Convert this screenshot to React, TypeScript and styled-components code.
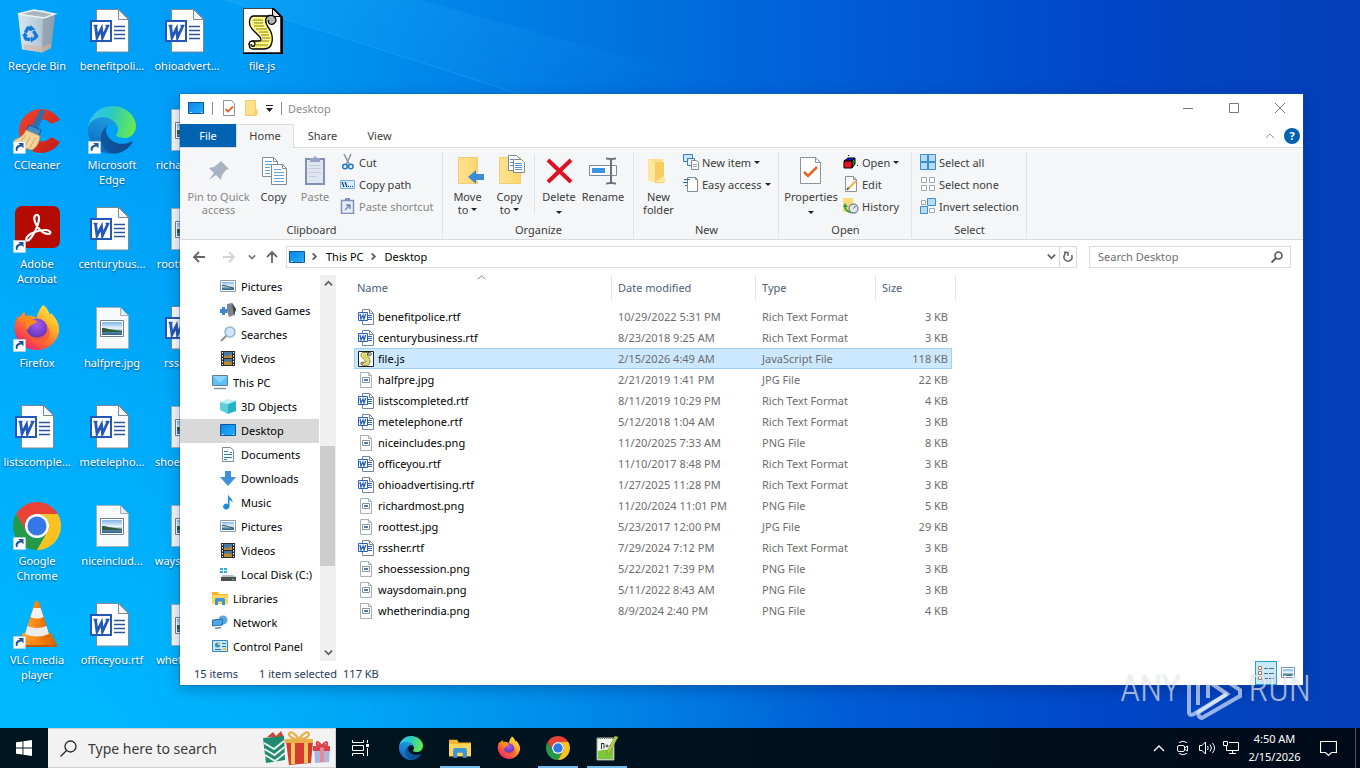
import React from "react";
import styled, { createGlobalStyle, css } from "styled-components";

const GlobalStyle = createGlobalStyle`
  *, *::before, *::after { box-sizing: border-box; }
  body {
    margin: 0;
    font-family: "Noto Sans", "Open Sans", sans-serif;
    font-size: 11px;
    line-height: 15px;
    color: #000;
  }
  button, input {
    font: inherit;
    color: inherit;
    margin: 0;
    padding: 0;
    border: 0;
    background: none;
  }
  svg { display: block; flex: none; }
`;

/* ---------- Desktop ---------- */

const Screen = styled.div`
  position: relative;
  display: flex;
  flex-direction: column;
  min-height: 100vh;
  overflow: hidden;
  background:
    radial-gradient(ellipse 62% 85% at 0% 100%, rgba(0, 190, 255, 0.85) 0%, rgba(0, 180, 255, 0) 100%),
    linear-gradient(90deg, #00a3fb 0%, #009cf6 18%, #0086ea 32%, #0062d8 58%, #0046c6 82%, #033fb8 100%);
`;

const Rays = styled.svg`
  position: absolute;
  inset: 0;
  width: 100%;
  height: 100%;
`;

const DesktopArea = styled.main`
  position: relative;
  flex: 1;
`;

const IconGrid = styled.ul`
  display: grid;
  grid-template-rows: repeat(7, 99px);
  grid-auto-columns: 75px;
  grid-auto-flow: column;
  margin: 0;
  padding: 0;
  list-style: none;
`;

const DesktopIcon = styled.button`
  display: flex;
  flex-direction: column;
  align-items: center;
  gap: 3px;
  width: 74px;
  padding-top: 7px;
  color: #fff;
  text-align: center;
  text-shadow: 0 1px 2px rgba(0, 30, 80, 0.7);
`;

const IconLabel = styled.span`
  white-space: nowrap;
`;

/* ---------- Explorer window ---------- */

const Window = styled.section`
  position: absolute;
  top: 94px;
  bottom: 43px;
  left: 180px;
  right: 57px;
  display: flex;
  flex-direction: column;
  background: #fff;
  box-shadow: 0 0 0 1px rgba(20, 90, 160, 0.35), 0 4px 14px rgba(0, 20, 70, 0.3);
`;

const TitleBar = styled.header`
  display: flex;
  align-items: center;
  height: 30px;
  padding: 0 0 2px 8px;
  color: #8b8b8b;
`;

const QuickTools = styled.div`
  display: flex;
  align-items: center;
  gap: 8px;
`;

const Bar = styled.span`
  width: 1px;
  height: 13px;
  background: #8a8a8a;
`;

const WindowTitle = styled.h1`
  flex: 1;
  margin: 0 0 0 6px;
  font-size: 11px;
  font-weight: 400;
`;

const CaptionButton = styled.button`
  display: grid;
  place-items: center;
  width: 46px;
  height: 28px;
`;

const Tabs = styled.nav`
  display: flex;
  align-items: stretch;
  height: 24px;
  border-bottom: 1px solid #dadbdc;
  color: #3c3c3c;
`;

const Tab = styled.button<{ $kind?: "file" | "active" }>`
  width: 57px;
  ${(p) =>
    p.$kind === "file" &&
    css`
      width: 56px;
      background: #0063b1;
      color: #fff;
    `}
  ${(p) =>
    p.$kind === "active" &&
    css`
      width: 58px;
      margin-bottom: -1px;
      padding-bottom: 2px;
      background: #f5f6f7;
      border: 1px solid #dadbdc;
      border-bottom: 0;
    `}
`;

const TabTools = styled.div`
  display: flex;
  align-items: center;
  gap: 9px;
  margin-left: auto;
  padding-right: 3px;
`;

const Help = styled.button`
  width: 16px;
  height: 16px;
  border-radius: 50%;
  background: #0063b1;
  color: #fff;
  font-weight: 700;
  line-height: 16px;
`;

const Ribbon = styled.div`
  display: flex;
  height: 92px;
  background: #f5f6f7;
  border-bottom: 1px solid #dadbdc;
  color: #3c3c3c;
`;

const Group = styled.div<{ $width: number }>`
  display: flex;
  flex-direction: column;
  flex: none;
  width: ${(p) => p.$width}px;
  background: linear-gradient(#e2e3e4, #e2e3e4) right 4px / 1px 86px no-repeat;
`;

const GroupBody = styled.div`
  display: flex;
  height: 73px;
  align-items: flex-start;
  padding-left: 4px;
`;

const GroupName = styled.div`
  line-height: 18px;
  text-align: center;
`;

const BigButton = styled.button<{ $width: number; $muted?: boolean }>`
  display: flex;
  flex-direction: column;
  align-items: center;
  gap: 4px;
  width: ${(p) => p.$width}px;
  padding-top: 6px;
  line-height: 13px;
  white-space: nowrap;
  color: ${(p) => (p.$muted ? "#868686" : "inherit")};
`;

const Divider = styled.span`
  width: 1px;
  height: 60px;
  margin: 6px 3px 0 3px;
  background: #e2e3e4;
`;

const Stack = styled.div`
  display: flex;
  flex-direction: column;
  padding: 3px 0 0 4px;
`;

const SmallButton = styled.button<{ $muted?: boolean }>`
  display: flex;
  align-items: center;
  gap: 3px;
  height: 22px;
  white-space: nowrap;
  color: ${(p) => (p.$muted ? "#868686" : "inherit")};
`;

const AddressRow = styled.div`
  display: flex;
  align-items: center;
  height: 35px;
  padding: 0 12px 2px;
`;

const NavButtons = styled.div`
  display: grid;
  grid-template-columns: 30px 26px 17px 21px;
  align-items: center;
  justify-items: start;
`;

const AddressBar = styled.div`
  display: flex;
  align-items: center;
  flex: 1;
  height: 22px;
  border: 1px solid #d9d9d9;
  padding-left: 2px;
`;

const Crumb = styled.button`
  padding: 0 7px 0 5px;
`;

const AddressEnd = styled.div`
  display: flex;
  align-items: center;
  align-self: stretch;
  margin-left: auto;
`;

const RefreshButton = styled.button`
  display: grid;
  place-items: center;
  width: 17px;
  height: 20px;
  margin-left: 3px;
  border-left: 1px solid #d9d9d9;
`;

const SearchBox = styled.label`
  display: flex;
  align-items: center;
  width: 202px;
  height: 22px;
  margin-left: 12px;
  padding: 0 7px 0 8px;
  border: 1px solid #d9d9d9;

  input {
    flex: 1;
    min-width: 0;
    outline: 0;
  }
  input::placeholder {
    color: #6d6d6d;
    opacity: 1;
  }
`;

const Content = styled.div`
  display: flex;
  flex: 1;
  min-height: 0;
`;

const NavPane = styled.ul`
  width: 139px;
  margin: 0;
  padding: 0;
  list-style: none;
`;

const NavItem = styled.button<{ $level: number; $selected?: boolean }>`
  display: flex;
  align-items: center;
  gap: 5px;
  width: 100%;
  height: 24px;
  padding: 0 0 2px ${(p) => (p.$level === 1 ? 32 : 40)}px;
  white-space: nowrap;
  background: ${(p) => (p.$selected ? "#d9d9d9" : "transparent")};
`;

const ScrollTrack = styled.div`
  display: flex;
  flex-direction: column;
  align-items: center;
  justify-content: space-between;
  width: 17px;
  border-left: 1px solid #fff;
  background: #f0f0f0;
`;

const ScrollArrow = styled.button`
  display: grid;
  place-items: center;
  width: 16px;
  height: 17px;
`;

const ScrollSpace = styled.div`
  flex: 1;
  width: 100%;
  display: flex;
  flex-direction: column;

  &::before { content: ""; flex: 154; }
  &::after { content: ""; flex: 78; }
`;

const ScrollThumb = styled.div`
  flex: 120;
  margin-right: 1px;
  background: #cdcdcd;
`;

const FilePane = styled.div`
  flex: 1;
  padding-left: 18px;
`;

const FileTable = styled.table`
  width: 602px;
  table-layout: fixed;
  border-collapse: separate;
  border-spacing: 0;
  text-align: left;
  color: #6d6d6d;

  th {
    padding: 0 0 6px;
    font-weight: 400;
    color: #4c607a;
  }
  td {
    height: 21px;
    padding: 0 0 0 6px;
  }
  th:first-child, td:first-child { padding-left: 3px; }
  td:last-child {
    padding: 0 4px 0 0;
    border-right: 4px solid transparent;
    background-clip: padding-box;
    text-align: right;
  }
`;

const HeadButton = styled.button`
  position: relative;
  display: block;
  width: 100%;
  height: 25px;
  padding-left: 6px;
  text-align: left;
  border-right: 1px solid #e5e5e5;

  th:first-child & { padding-left: 0; }
`;

const SortMark = styled.span`
  position: absolute;
  top: -2px;
  left: 50%;
  margin-left: -7px;
`;

const FileRow = styled.tr<{ $selected?: boolean }>`
  ${(p) =>
    p.$selected &&
    css`
      td {
        background-color: #cce8ff;
        box-shadow: inset 0 1px #99d1ff, inset 0 -1px #99d1ff;
      }
      td:first-child { box-shadow: inset 0 1px #99d1ff, inset 0 -1px #99d1ff, inset 1px 0 #99d1ff; }
      td:last-child { box-shadow: inset 0 1px #99d1ff, inset 0 -1px #99d1ff, inset -1px 0 #99d1ff; }
    `}
`;

const FileName = styled.span`
  display: flex;
  align-items: center;
  gap: 4px;
  padding-left: 1px;
  color: #000;
`;

const StatusBar = styled.footer`
  display: flex;
  align-items: center;
  height: 24px;
  padding: 0 8px 0 14px;
  gap: 6px;
  color: #1e395b;
`;

const ItemCount = styled.span`
  width: 59px;
`;

const ViewButton = styled.button<{ $on?: boolean }>`
  display: grid;
  place-items: center;
  width: ${(p) => (p.$on ? 22 : 14)}px;
  height: 24px;
  background: ${(p) => (p.$on ? "#cbe8f6" : "transparent")};
  border: ${(p) => (p.$on ? "1px solid #26a0da" : "0")};
`;

const ViewButtons = styled.div`
  display: flex;
  gap: 4px;
  margin-left: auto;
`;

/* ---------- Watermark ---------- */

const Watermark = styled.div`
  position: absolute;
  right: 49px;
  bottom: 47px;
  display: flex;
  align-items: center;
  gap: 4px;
  height: 64px;
  font-family: "Roboto Condensed", Roboto, sans-serif;
  font-size: 36px;
  font-weight: 300;
  line-height: 64px;
  color: rgba(255, 255, 255, 0.6);
  text-shadow: 0 0 2px rgba(90, 110, 150, 0.35);
  pointer-events: none;
`;

/* ---------- Taskbar ---------- */

const Taskbar = styled.footer`
  position: relative;
  display: flex;
  height: 40px;
  background: linear-gradient(90deg, #001722 0%, #00131f 45%, #000a1a 100%);
  color: #fff;
`;

const TaskButton = styled.button<{ $running?: boolean }>`
  display: grid;
  place-items: center;
  width: 48px;
  height: 40px;
  background: ${(p) =>
    p.$running ? "linear-gradient(#76b9ed, #76b9ed) center bottom / 40px 2px no-repeat" : "none"};
`;

const Apps = styled.div`
  display: flex;
  gap: 1px;
  margin-left: 3px;
`;

const TaskSearch = styled.label`
  display: flex;
  align-items: center;
  width: 288px;
  gap: 11px;
  padding: 0 4px 0 12px;
  background: #f2f2f2;
  border: 1px solid #d0d0d0;
  border-left: 0;
  font-size: 14px;

  input {
    flex: 1;
    min-width: 0;
    outline: 0;
    height: 24px;
  }
  input::placeholder {
    color: #3a3a3a;
    opacity: 1;
  }
`;

const Tray = styled.div`
  display: flex;
  margin-left: auto;
`;

const TrayButton = styled.button<{ $width?: number }>`
  display: grid;
  place-items: center;
  width: ${(p) => p.$width ?? 24}px;
`;

const Clock = styled.button`
  width: 63px;
  line-height: 18px;
  text-align: center;
`;

const ShowDesktop = styled.button`
  width: 5px;
  margin-left: 5px;
  border-left: 1px solid #4a5560;
`;

/* ---------- Shared drawing definitions ---------- */

const Defs = styled.svg`
  position: absolute;
`;

const SharedDefs = () => (
  <Defs width="0" height="0" aria-hidden="true">
    <defs>
      <linearGradient id="edgeA" x1="0" y1="0.6" x2="1" y2="0.6">
        <stop offset="0" stopColor="#0c59a4" />
        <stop offset="1" stopColor="#114a8b" />
      </linearGradient>
      <linearGradient id="edgeB" x1="0.6" y1="0" x2="0.2" y2="1">
        <stop offset="0" stopColor="#1b9de2" />
        <stop offset="0.5" stopColor="#1683d0" />
        <stop offset="1" stopColor="#0a5fae" />
      </linearGradient>
      <linearGradient id="edgeC" x1="0" y1="0.3" x2="1" y2="0.5">
        <stop offset="0" stopColor="#35c1f1" />
        <stop offset="0.45" stopColor="#2cc9c2" />
        <stop offset="1" stopColor="#66eb4e" />
      </linearGradient>
      <linearGradient id="foxBody" x1="0.9" y1="0.05" x2="0.2" y2="0.95">
        <stop offset="0" stopColor="#fff24a" />
        <stop offset="0.35" stopColor="#ffb02a" />
        <stop offset="0.65" stopColor="#ff6a2f" />
        <stop offset="1" stopColor="#ee1f6c" />
      </linearGradient>
      <radialGradient id="foxGlobe" cx="0.5" cy="0.3" r="0.7">
        <stop offset="0" stopColor="#a55ae8" />
        <stop offset="1" stopColor="#5a2fb8" />
      </radialGradient>
      <linearGradient id="screenBlue" x1="0" y1="0" x2="1" y2="1">
        <stop offset="0" stopColor="#0a84e8" />
        <stop offset="1" stopColor="#25b0fb" />
      </linearGradient>
      <linearGradient id="photo" x1="0" y1="0" x2="0" y2="1">
        <stop offset="0" stopColor="#7fb5ea" />
        <stop offset="0.5" stopColor="#e8f4f8" />
        <stop offset="0.75" stopColor="#5b8fa8" />
        <stop offset="1" stopColor="#2c5f86" />
      </linearGradient>
      <linearGradient id="binSide" x1="0" y1="0" x2="1" y2="0">
        <stop offset="0" stopColor="#e9eef2" />
        <stop offset="0.6" stopColor="#c4ccd3" />
        <stop offset="1" stopColor="#98a5b0" />
      </linearGradient>
      <linearGradient id="coneOrange" x1="0" y1="0" x2="1" y2="0">
        <stop offset="0" stopColor="#ffa53a" />
        <stop offset="0.5" stopColor="#f78412" />
        <stop offset="1" stopColor="#d96400" />
      </linearGradient>
      <linearGradient id="folderFill" x1="0" y1="0" x2="1" y2="0">
        <stop offset="0" stopColor="#ffe394" />
        <stop offset="1" stopColor="#fbd568" />
      </linearGradient>
      <linearGradient id="ccRed" x1="0" y1="0" x2="1" y2="1">
        <stop offset="0" stopColor="#f4452e" />
        <stop offset="1" stopColor="#c41a16" />
      </linearGradient>
      <linearGradient id="rayFade" x1="0" y1="0" x2="1" y2="0.6">
        <stop offset="0" stopColor="#2fb4ff" stopOpacity="0.22" />
        <stop offset="1" stopColor="#2fb4ff" stopOpacity="0" />
      </linearGradient>
      <pattern id="parchment" width="2" height="2" patternUnits="userSpaceOnUse">
        <path d="M0 0h2v2H0z" fill="#fbf56a" />
        <path d="M0 0h1v1H0z" fill="#fffde0" />
      </pattern>
    </defs>
  </Defs>
);

/* ---------- Desktop icon drawings ---------- */

const Shortcut = () => (
  <g>
    <path d="M0.500 35.500h12v12h-12z" fill="#fff" stroke="#c5d3e0" strokeWidth="0.600" />
    <path d="M3 45c-1-4 1-6 4-6.200l-1.800-1.800h5.300v5.300l-1.800-1.700c-2.200 0-4.500 1.400-4.200 4.400z" fill="#1e5799" />
  </g>
);

const WordArt = () => (
  <svg width="48" height="48" viewBox="0 0 48 48">
    <path d="M8.500 2.500h22.500l9.500 9.500v33h-32z" fill="#fff" stroke="#7b8794" />
    <path d="M30.500 2.500v10h10z" fill="#f2f6fa" stroke="#7b8794" />
    <path d="M26 19.500h11M26 23.500h11M26 27.500h11M26 31.500h11" stroke="#2b579a" strokeWidth="1.300" />
    <path d="M3 14h20v20H3z" fill="#fff" stroke="#2458b8" strokeWidth="2" />
    <path d="M7.500 18.500l1.500 12 4.500-9 1 9 5.500-12" fill="none" stroke="#2458b8" strokeWidth="2.800" />
    <path d="M5.500 18.500h4M17.500 18.500h4" stroke="#2458b8" strokeWidth="1.500" />
  </svg>
);

const PictureArt = () => (
  <svg width="48" height="48" viewBox="0 0 48 48">
    <path d="M8.500 3.500h24l8 8v33h-32z" fill="#f8f9fa" stroke="#9fb0bd" />
    <path d="M32.500 3.500v8h8z" fill="#e3ebf0" stroke="#9fb0bd" />
    <path d="M12.500 16.500h23v16h-23z" fill="#fff" stroke="#6e7f92" />
    <path d="M14 18h20v13H14z" fill="url(#photo)" />
    <path d="M14 24c5 0 9 2 20 3v1H14z" fill="#2f5a3b" />
  </svg>
);

const RecycleArt = () => (
  <svg width="48" height="48" viewBox="0 0 48 48">
    <path d="M5 7l25-4 12 5-4 33-9 4.500-20-3z" fill="url(#binSide)" opacity="0.92" />
    <path d="M30 9l12-1-4 33-9 4.500z" fill="#8f9ba6" opacity="0.7" />
    <path d="M5 7l16-4 21 4-11 4z" fill="#a9b6c0" stroke="#eef3f6" strokeWidth="1.400" />
    <path d="M10 37l19 3 9-4-.5 5-8.500 4.500-18-3z" fill="#d9b49c" opacity="0.6" />
    <g fill="none" stroke="#1379d2" strokeWidth="3.400">
      <path d="M12.500 25.500l2.500-4.500 4 .8" />
      <path d="M20.500 24l3 5-2.500 3" />
      <path d="M17.500 32.500l-4.500-.5-1.500-3" />
    </g>
    <path d="M17.500 18l5 4.500-6 1.500zM18 29.500v6l4-3zM9 29l3-4 3 4z" fill="#1379d2" />
  </svg>
);

const ScriptShape = () => (
  <g stroke="#000" strokeWidth="1.300">
    <path
      d="M14 9h17c-5 2-5 7-2 11 4 5 5 9 4 15-1 5-4 7-8 7H14c-5 0-5-8 0-8h6c3 0 2-3 0-5l-7-7c-4-4-3-12 1-13z"
      fill="url(#parchment)"
    />
    <path d="M27 16c-3-8 9-11 10-3 0 3-3 5-6 4-2-1-2-3-1-4" fill="#b4b4b4" />
    <path d="M10 38c0-5 6-5 6-1 0 3-4 3-4 0" fill="#fdfbc0" />
    <path
      d="M14 13h10M15 16h9M15 19h10M17 22h11M20 25h9M22 28h8M23 31h8M22 34h8M17 38h12"
      stroke="#7d7600"
      strokeWidth="0.900"
    />
  </g>
);

const ScriptArt = () => (
  <svg width="48" height="48" viewBox="0 0 48 48">
    <path d="M5 1h31l9 9v37H5z" fill="#000" />
    <path d="M5.500 1.500h29l8 8v36h-37z" fill="#fff" stroke="#444" />
    <path d="M34.500 1.500v8h8z" fill="#ddd" stroke="#000" />
    <g transform="translate(1 0)">
      <ScriptShape />
    </g>
  </svg>
);

const CCleanerArt = () => (
  <svg width="48" height="48" viewBox="0 0 48 48">
    <path d="M47 14A22 22 0 1 0 47 36l-9-5a11 11 0 1 1 0-13z" fill="url(#ccRed)" />
    <path d="M28 3l4 2-7 18-6-3z" fill="#2b6fb3" />
    <path d="M16 19l12 5-2 6-13-5z" fill="#3f8ed0" stroke="#1d568f" />
    <path d="M13 24l14 6c-1 7-3 11-8 14-5-1-13-4-18-10 6-2 10-5 12-10z" fill="#f3d49c" stroke="#c99b55" />
    <path d="M13 29l-6 7M17 31l-5 9M22 32l-5 10" stroke="#d0a566" />
    <Shortcut />
  </svg>
);

const EdgeArt = ({ size = 48, shortcut = false }: { size?: number; shortcut?: boolean }) => (
  <svg width={size} height={size} viewBox="0 0 48 48">
    <g transform="scale(0.1875) translate(-4.630 -4.920)">
      <path
        d="M235.680 195.460a93.730 93.730 0 0 1-10.540 4.710 101.870 101.870 0 0 1-35.900 6.460c-47.320 0-88.540-32.550-88.540-74.320A31.480 31.480 0 0 1 117.130 105c-42.800 1.800-53.800 46.400-53.800 72.530 0 73.880 68.090 81.370 82.760 81.370 7.910 0 19.840-2.300 27-4.560l1.310-.44A128.340 128.340 0 0 0 241 201.150a4 4 0 0 0-5.320-5.690z"
        fill="url(#edgeA)"
      />
      <path
        d="M110.340 246.340A79.200 79.200 0 0 1 87.600 225a80.720 80.720 0 0 1 29.530-120c3.120-1.470 8.450-4.130 15.540-4a32.350 32.350 0 0 1 25.690 13 31.880 31.880 0 0 1 6.360 18.660c0-.21 24.460-79.600-80-79.600-43.900 0-80 41.660-80 78.210a130.150 130.150 0 0 0 12.110 56 128 128 0 0 0 156.380 67.110 75.550 75.550 0 0 1-62.780-8z"
        fill="url(#edgeB)"
      />
      <path
        d="M156.940 153.780c-.81 1.050-3.300 2.500-3.300 5.660 0 2.610 1.700 5.120 4.720 7.230 14.380 10 41.490 8.680 41.560 8.680A59.560 59.560 0 0 0 230.190 167a61.380 61.380 0 0 0 30.430-52.880c.26-22.410-8-37.310-11.340-43.910C228.090 28.760 182.350 4.920 132.610 4.920a128 128 0 0 0-128 126.200c.48-36.540 36.800-66 80-66 3.500 0 23.460.34 42 10.070 16.340 8.580 24.900 18.940 30.850 29.210 6.180 10.670 7.280 24.150 7.280 29.520s-2.700 13.300-7.800 19.860z"
        fill="url(#edgeC)"
      />
    </g>
    {shortcut && <Shortcut />}
  </svg>
);

const AcrobatArt = () => (
  <svg width="48" height="48" viewBox="0 0 48 48">
    <rect x="2" y="1" width="45" height="42" rx="7" fill="#b30b00" />
    <path
      d="M23 10c3-1 4 3 2 9-2 6-6 13-9 16-3 2-4-1-1-4 4-4 12-6 17-6 6 0 7 4 3 4-5 0-11-6-13-12-1-3-1-6 1-7z"
      fill="none"
      stroke="#fff"
      strokeWidth="2.200"
    />
    <Shortcut />
  </svg>
);

const FirefoxArt = ({ size = 48, shortcut = false }: { size?: number; shortcut?: boolean }) => (
  <svg width={size} height={size} viewBox="0 0 48 48">
    <path
      d="M30 1c5 3 6 8 7 10l1-2c5 5 9 11 8 19A22.500 22.500 0 0 1 1.500 25c0-5 1-9 3-13l2 2c1-3 2-4 5-6l1 4c4-1 8 0 11 2 1-5 3-9 6.500-13z"
      fill="url(#foxBody)"
    />
    <circle cx="24" cy="25" r="10.500" fill="url(#foxGlobe)" />
    <path d="M5 14c5-3 10-2 13 1l6 2c0 3-5 3-7 5-2 1-1 3-3 4-2-6 0-8-3-9-3 0-5 1-6-3z" fill="#ff8a1e" />
    <path d="M13 24c2 9 10 11 16 8 4-2 6-6 5-10 4 4 4 11-1 15-8 6-19 0-20-13z" fill="#ff5b34" opacity="0.8" />
    {shortcut && <Shortcut />}
  </svg>
);

const ChromeArt = ({ size = 48, shortcut = false }: { size?: number; shortcut?: boolean }) => (
  <svg width={size} height={size} viewBox="0 0 48 48">
    <path d="M24 12h20.780A24 24 0 0 0 3.220 12L13.610 30A12 12 0 0 1 24 12z" fill="#ea4335" />
    <path d="M13.610 30L3.220 12A24 24 0 0 0 24 48l10.390-18a12 12 0 0 1-20.780 0z" fill="#249a48" />
    <path d="M34.390 30L24 48a24 24 0 0 0 20.780-36H24a12 12 0 0 1 10.390 18z" fill="#fcc31e" />
    <circle cx="24" cy="24" r="12" fill="#fff" />
    <circle cx="24" cy="24" r="9.500" fill="#3478e8" />
    {shortcut && <Shortcut />}
  </svg>
);

const VlcArt = () => (
  <svg width="48" height="48" viewBox="0 0 48 48">
    <path d="M10 32h28l6 12H4z" fill="url(#coneOrange)" />
    <path d="M4 44h40v2H4z" fill="#c25a00" />
    <path d="M22 1q2-2 4 0l11 35q-13 8-26 0z" fill="url(#coneOrange)" />
    <path d="M20.500 7h7l3 9q-6.500 3-13 0z" fill="#f1f1f1" />
    <path d="M14.500 25q9.500 4 19 0l2.500 8q-12 5-24 0z" fill="#ececec" />
    <Shortcut />
  </svg>
);

/* ---------- 16px drawings ---------- */

const Icon16 = ({ children }: { children: React.ReactNode }) => (
  <svg width="16" height="16" viewBox="0 0 16 16" aria-hidden="true">
    {children}
  </svg>
);

const MonitorIcon = () => (
  <Icon16>
    <path d="M0.500 2.500h15v11h-15z" fill="url(#screenBlue)" stroke="#0a5a9e" />
    <path d="M2 12.500h1.500M13 12.500h1" stroke="#fff" />
  </Icon16>
);

const PictureIcon = () => (
  <Icon16>
    <path d="M0.500 2.500h15v11h-15z" fill="#fff" stroke="#8b9aa8" />
    <path d="M2 4h12v8H2z" fill="url(#photo)" />
    <path d="M2 8c4 0 7 1 12 3v-1c-4-1-7-3-12-3z" fill="#33536b" />
  </Icon16>
);

const GamesIcon = () => (
  <Icon16>
    <path d="M7 2l5-1 4 6-2 6-5 2-2-6z" fill="#7d858d" />
    <path d="M12 1l4 6-2 7z" fill="#3d4247" />
    <path d="M0 7h2V5h3v2h2v4H5v2H2v-2H0z" fill="#3b8ad0" />
  </Icon16>
);

const SearchesIcon = () => (
  <Icon16>
    <path d="M1 15l6-6" stroke="#9c8f86" strokeWidth="2" />
    <circle cx="10" cy="6" r="5" fill="#cfe7fa" stroke="#8fb3d1" strokeWidth="1.400" />
  </Icon16>
);

const VideosIcon = () => (
  <Icon16>
    <path d="M1 1h14v15H1z" fill="#2c2c2c" />
    <path d="M4 2h8v6H4zM4 9h8v6H4z" fill="#4a76a8" />
    <path d="M4 5l3 2 5-3v4H4zM4 12l4-1 4 2v2H4z" fill="#b98b2b" />
    <path d="M2.500 2v13M13.500 2v13" stroke="#fff" strokeDasharray="1.500 1.500" />
  </Icon16>
);

const PcIcon = () => (
  <Icon16>
    <path d="M0.500 1.500h15v10h-15z" fill="#5cc0f7" stroke="#5d7f99" />
    <path d="M1 2h14L8 9z" fill="#8ad6fd" />
    <path d="M2 14.500h12" stroke="#7d93a3" strokeWidth="1.400" />
  </Icon16>
);

const CubeIcon = () => (
  <Icon16>
    <path d="M0 4l8-3 8 2-8 3z" fill="#bdf0f3" />
    <path d="M8 6l8-3v10l-8 3z" fill="#25b4c3" />
    <path d="M0 4l8 2v10l-8-4z" fill="#5fd0da" />
  </Icon16>
);

const DocumentsIcon = () => (
  <Icon16>
    <path d="M2.500 1.500h8l3 3v11h-11z" fill="#fff" stroke="#7d8a96" />
    <path d="M4 5.500h4M4 8.500h8M4 11.500h8M10 6.500h2M4 13.500h3" stroke="#2b7ab8" />
  </Icon16>
);

const DownloadsIcon = () => (
  <Icon16>
    <path d="M5 1h6v6h5l-8 9-8-9h5z" fill="#3f8fdc" />
  </Icon16>
);

const MusicIcon = () => (
  <Icon16>
    <path d="M8 0c1 4 5 4 4.500 9-.5-2-2-3-3-3v6.500a3.200 3 0 1 1-1.500-2.500z" fill="#1b8be0" />
  </Icon16>
);

const DiskIcon = () => (
  <Icon16>
    <path d="M0 2h3v2H0zM4 2h3v2H4zM0 5h3v2H0zM4 5h3v2H4z" fill="#23b3dd" />
    <path d="M3 9h10l3 2H1z" fill="#b9bfc4" />
    <path d="M1 11h15v4H1z" fill="#4b4f53" />
    <path d="M12 13.500h2" stroke="#5be04e" />
  </Icon16>
);

const LibrariesIcon = ({ size = 16 }: { size?: number }) => (
  <svg width={size} height={size} viewBox="0 0 16 16" aria-hidden="true">
    <path d="M0 2h6l1 2h9v10H0z" fill="#f2b42a" />
    <path d="M0 5h16v9H0z" fill="#ffd45c" />
    <path d="M3 15V9.500q0-1.500 1.500-1.500h7q1.500 0 1.500 1.500V15h-3v-3.500H6V15z" fill="#3b95d9" />
  </svg>
);

const NetworkIcon = () => (
  <Icon16>
    <circle cx="11" cy="6" r="4.500" fill="#5aa9de" />
    <path d="M0.500 6l10-1v6l-10 1z" fill="#4aa7ec" stroke="#336f9e" />
    <path d="M3 14.500l6-1" stroke="#6c8ba1" strokeWidth="1.500" />
  </Icon16>
);

const ControlIcon = () => (
  <Icon16>
    <path d="M0.500 2.500h15v11h-15z" fill="#bfe6fb" stroke="#3a85b8" />
    <circle cx="5.500" cy="7" r="2.500" fill="#2f8ed0" />
    <path d="M5.500 7V4.500A2.500 2.500 0 0 1 8 7z" fill="#f2c53c" />
    <path d="M10 5.500h4M10 8.500h4M3 11.500h6" stroke="#3078ab" />
    <path d="M11 10h3v2h-3z" fill="#f2c53c" />
  </Icon16>
);

const RtfIcon = () => (
  <Icon16>
    <path d="M4.500 0.500h7l4 4v11h-11z" fill="#fff" stroke="#7286a0" />
    <path d="M11.500 0.500v4h4" fill="none" stroke="#7286a0" />
    <path d="M10 6.500h4M10 8.500h4M10 10.500h4" stroke="#2f66b8" />
    <path d="M0.500 3.500h9v8h-9z" fill="#fff" stroke="#2860b8" />
    <path d="M2 5l1 5L5 6l1 4 1.700-5" fill="none" stroke="#2860b8" strokeWidth="1.300" />
  </Icon16>
);

const ImageFileIcon = () => (
  <Icon16>
    <path d="M2.500 0.500h8l3 3v12h-11z" fill="#fdfdfd" stroke="#a5b1bb" />
    <path d="M10.500 0.500v3h3" fill="none" stroke="#a5b1bb" />
    <path d="M4.500 5.500h7v5h-7z" fill="#fff" stroke="#8496a8" />
    <path d="M6 7h4v2H6z" fill="#4f7ca8" />
  </Icon16>
);

const ScriptFileIcon = () => (
  <Icon16>
    <path d="M0.500 0.500h15v15h-15z" fill="#fff" stroke="#222" />
    <g transform="translate(-1 -2) scale(0.390)">
      <ScriptShape />
    </g>
  </Icon16>
);

const CutIcon = () => (
  <Icon16>
    <path d="M4 0l5 10M11 0L6.500 10" stroke="#8a949e" strokeWidth="1.500" />
    <circle cx="5" cy="12.500" r="2.300" fill="none" stroke="#2277c4" strokeWidth="1.500" />
    <circle cx="10.800" cy="12.500" r="2.300" fill="none" stroke="#2277c4" strokeWidth="1.500" />
  </Icon16>
);

const CopyPathIcon = () => (
  <Icon16>
    <path d="M0.500 4.500h14v8h-14z" fill="#d6ebfb" stroke="#74b2e6" />
    <path d="M2 6l2 5M5 6l2 5M8 10.500h1M10 10.500h1M12 10.500h1" stroke="#123c6b" strokeWidth="1.200" />
  </Icon16>
);

const PasteShortcutIcon = () => (
  <Icon16>
    <path d="M1.500 2.500h12v13h-12z" fill="#e6ecf6" stroke="#8193bd" strokeWidth="1.500" />
    <path d="M5 0h5v3H5z" fill="#8193bd" />
    <path d="M5 12l4-4M6 7h4v4" fill="none" stroke="#6f84b5" strokeWidth="1.400" />
  </Icon16>
);

const NewItemIcon = () => (
  <Icon16>
    <path d="M0.500 0.500h9v7h-9z" fill="#cfe6fa" stroke="#3a7fc2" />
    <path d="M4.500 4.500h7v7h-7z" fill="#e6f1fb" stroke="#3a7fc2" />
    <path d="M8.500 6.500h5l2 2v7h-7z" fill="#fff" stroke="#7f8a94" />
    <path d="M10 10.500h4M10 12.500h4" stroke="#9aa4ad" />
  </Icon16>
);

const EasyAccessIcon = () => (
  <Icon16>
    <path d="M4.500 1.500h8l2 2v12h-10z" fill="#fff" stroke="#7f8a94" />
    <path d="M12.500 1.500v2h2" fill="none" stroke="#7f8a94" />
    <path d="M1 3.500h6M0 6.500h5M2 9.500h2" stroke="#2d6db5" strokeWidth="1.200" />
  </Icon16>
);

const OpenIcon = () => (
  <Icon16>
    <path d="M1 7l4-3h7l-3 3z" fill="#1414d6" stroke="#000" />
    <path d="M9 7l3-3v6l-3 4z" fill="#10a020" stroke="#000" />
    <path d="M1 7h8v7H1z" fill="#e8101c" stroke="#000" />
    <path d="M5 1h1v1H5zM14 11h1v1h-1z" fill="#000" />
  </Icon16>
);

const EditIcon = () => (
  <Icon16>
    <path d="M2.500 0.500h8l3 3v12h-11z" fill="#fff" stroke="#8a939b" />
    <path d="M10.500 0.500v3h3" fill="none" stroke="#8a939b" />
    <path d="M5 13l8-8" stroke="#efb14a" strokeWidth="2.200" />
    <path d="M4 14l1.500-2.500" stroke="#555" strokeWidth="1.500" />
  </Icon16>
);

const HistoryIcon = () => (
  <Icon16>
    <path d="M0 0h10v14H0z" fill="#fbdc7a" />
    <circle cx="10.500" cy="10.500" r="4.500" fill="#dfe8ee" stroke="#7c8a94" strokeWidth="1.300" />
    <path d="M10.500 10.500l2-2.500" stroke="#555" />
    <path d="M2 8c0 4 3 6 6 6" fill="none" stroke="#2fa043" strokeWidth="2" />
    <path d="M0 9l2-4 3 4z" fill="#2fa043" />
  </Icon16>
);

const SelectAllIcon = () => (
  <Icon16>
    <path d="M0.500 0.500h15v15h-15z" fill="#b6dcf8" stroke="#3f8fd0" />
    <path d="M8 0v16M0 8h16" stroke="#3f8fd0" strokeWidth="2" />
  </Icon16>
);

const SelectNoneIcon = () => (
  <Icon16>
    <path
      d="M1.500 1.500h5v5h-5zM9.500 1.500h5v5h-5zM1.500 9.500h5v5h-5zM9.500 9.500h5v5h-5z"
      fill="#fff"
      stroke="#a2a9af"
    />
  </Icon16>
);

const InvertIcon = () => (
  <Icon16>
    <path d="M1.500 2.500h4v4h-4zM9.500 10.500h5v4h-5z" fill="#fff" stroke="#a2a9af" />
    <path d="M7.500 0.500h8v7h-8zM0.500 8.500h7v7h-7z" fill="#b6dcf8" stroke="#3f8fd0" />
  </Icon16>
);

/* ---------- 32px ribbon drawings ---------- */

const Icon32 = ({ children }: { children: React.ReactNode }) => (
  <svg width="32" height="32" viewBox="0 0 32 32" aria-hidden="true">
    {children}
  </svg>
);

const PinIcon = () => (
  <Icon32>
    <path d="M18 7l8 8-3 1-4 5-1 5-5-5-7 5 5-7-5-5 5-1 5-4z" fill="#a7b3c1" />
  </Icon32>
);

const CopyIcon = () => (
  <Icon32>
    <path d="M4.500 3.500h11l4 4v15h-15z" fill="#fff" stroke="#7f8a94" />
    <path d="M15.500 3.500v4h4" fill="none" stroke="#7f8a94" />
    <path d="M7 10.500h7M7 13.500h5M7 16.500h5M7 19.500h5M7 7.500h7" stroke="#66a4dc" />
    <path d="M13.500 10.500h11l4 4v16h-15z" fill="#fff" stroke="#7f8a94" />
    <path d="M24.500 10.500v4h4" fill="none" stroke="#7f8a94" />
    <path d="M16 15.500h7M16 18.500h10M16 21.500h10M16 24.500h10M16 27.500h10" stroke="#66a4dc" />
  </Icon32>
);

const PasteIcon = () => (
  <Icon32>
    <path d="M7 5h18v25H7z" fill="#dfe5f1" stroke="#8390b5" strokeWidth="2" />
    <path d="M11 4h3l2-2 2 2h3v4H11z" fill="#97a3c2" />
    <path d="M10 11.500h12M10 14.500h12M10 18.500h12M10 22.500h8" stroke="#c3cbdd" />
  </Icon32>
);

const MoveIcon = () => (
  <Icon32>
    <path d="M6 3h20v27H6z" fill="url(#folderFill)" />
    <path d="M6.500 3.500h19v26h-19z" fill="none" stroke="#efce74" />
    <path d="M16 23l8-7v4h8v6h-8v4z" fill="#3a8ad6" />
  </Icon32>
);

const CopyToIcon = () => (
  <Icon32>
    <path d="M5 3h22v27H5z" fill="url(#folderFill)" />
    <path d="M5.500 3.500h21v26h-21z" fill="none" stroke="#efce74" />
    <path d="M14.500 1.500h8l3 3v12h-11z" fill="#fff" stroke="#7f8a94" />
    <path d="M19.500 5.500h8l3 3v10h-11z" fill="#fff" stroke="#7f8a94" />
    <path d="M21 9.500h7M21 11.500h7M21 13.500h7M21 15.500h7M16 5.500h3M16 8.500h3M16 11.500h3" stroke="#4b92d6" />
  </Icon32>
);

const DeleteIcon = () => (
  <Icon32>
    <path d="M5 6l23 22M28 6L5 28" stroke="#e01020" strokeWidth="4" />
  </Icon32>
);

const RenameIcon = () => (
  <Icon32>
    <path d="M2.500 11.500h27v10h-27z" fill="#fff" stroke="#7f8a94" />
    <path d="M5 14h13v5H5z" fill="#3a93e0" />
    <path d="M24 4v26M19 4.500q5 0 5 2 0-2 5-2M19 29.500q5 0 5-2 0 2 5 2" fill="none" stroke="#6a737b" strokeWidth="2" />
  </Icon32>
);

const NewFolderIcon = () => (
  <Icon32>
    <path d="M5 5h15v22H5z" fill="#fbdf88" />
    <path d="M12 8h9v21h-9z" fill="#f5cd62" />
    <path d="M5 5l7 3v21l-7-3z" fill="#ffe7a0" />
    <path d="M21 22l2 6H12z" fill="#fbe7a6" />
  </Icon32>
);

const PropertiesIcon = () => (
  <Icon32>
    <path d="M5.500 3.500h15l5 5v21h-20z" fill="#fff" stroke="#8a939b" />
    <path d="M20.500 3.500v5h5" fill="none" stroke="#8a939b" />
    <path d="M9 18l4 4 9-9" fill="none" stroke="#e8632a" strokeWidth="2.600" />
  </Icon32>
);

/* ---------- Small glyphs ---------- */

const DownArrow = () => (
  <svg width="6" height="3" viewBox="0 0 6 3" aria-hidden="true">
    <path d="M0 0h6L3 3z" fill="#222" />
  </svg>
);

const Chevron = ({ dir, color = "#606060", size = 9, weight = 2 }: { dir: "up" | "down" | "right"; color?: string; size?: number; weight?: number }) => (
  <svg width={size} height={size} viewBox="0 0 10 10" aria-hidden="true">
    <path
      d={dir === "up" ? "M1 7l4-4 4 4" : dir === "down" ? "M1 3l4 4 4-4" : "M3 1.500L6.500 5 3 8.500"}
      fill="none"
      stroke={color}
      strokeWidth={weight}
    />
  </svg>
);

const Arrow = ({ dir, color }: { dir: "left" | "right" | "up"; color: string }) => (
  <svg width="14" height="14" viewBox="0 0 14 14" aria-hidden="true">
    <path
      d={dir === "left" ? "M13 7H2M7 2L2 7l5 5" : dir === "right" ? "M1 7h11M7 2l5 5-5 5" : "M7 13V2M2 7l5-5 5 5"}
      fill="none"
      stroke={color}
      strokeWidth="1.800"
    />
  </svg>
);

const LabelArrow = styled.span`
  display: inline-flex;
  align-items: center;
  justify-content: center;
  gap: 3px;
  height: 13px;
`;

/* ---------- Data ---------- */

type Art = () => React.ReactElement;

const desktopIcons: { lines: string[]; art: Art }[] = [
  { lines: ["Recycle Bin"], art: RecycleArt },
  { lines: ["CCleaner"], art: CCleanerArt },
  { lines: ["Adobe", "Acrobat"], art: AcrobatArt },
  { lines: ["Firefox"], art: () => <FirefoxArt shortcut /> },
  { lines: ["listscomple..."], art: WordArt },
  { lines: ["Google", "Chrome"], art: () => <ChromeArt shortcut /> },
  { lines: ["VLC media", "player"], art: VlcArt },
  { lines: ["benefitpoli..."], art: WordArt },
  { lines: ["Microsoft", "Edge"], art: () => <EdgeArt shortcut /> },
  { lines: ["centurybus..."], art: WordArt },
  { lines: ["halfpre.jpg"], art: PictureArt },
  { lines: ["metelepho..."], art: WordArt },
  { lines: ["niceinclud..."], art: PictureArt },
  { lines: ["officeyou.rtf"], art: WordArt },
  { lines: ["ohioadvert..."], art: WordArt },
  { lines: ["richardmo..."], art: PictureArt },
  { lines: ["roottest.jpg"], art: PictureArt },
  { lines: ["rssher.rtf"], art: WordArt },
  { lines: ["shoessessi..."], art: PictureArt },
  { lines: ["waysdoma..."], art: PictureArt },
  { lines: ["whetherin..."], art: PictureArt },
  { lines: ["file.js"], art: ScriptArt },
];

const navItems: { label: string; level: number; icon: Art; selected?: boolean }[] = [
  { label: "Pictures", level: 2, icon: PictureIcon },
  { label: "Saved Games", level: 2, icon: GamesIcon },
  { label: "Searches", level: 2, icon: SearchesIcon },
  { label: "Videos", level: 2, icon: VideosIcon },
  { label: "This PC", level: 1, icon: PcIcon },
  { label: "3D Objects", level: 2, icon: CubeIcon },
  { label: "Desktop", level: 2, icon: MonitorIcon, selected: true },
  { label: "Documents", level: 2, icon: DocumentsIcon },
  { label: "Downloads", level: 2, icon: DownloadsIcon },
  { label: "Music", level: 2, icon: MusicIcon },
  { label: "Pictures", level: 2, icon: PictureIcon },
  { label: "Videos", level: 2, icon: VideosIcon },
  { label: "Local Disk (C:)", level: 2, icon: DiskIcon },
  { label: "Libraries", level: 1, icon: LibrariesIcon as Art },
  { label: "Network", level: 1, icon: NetworkIcon },
  { label: "Control Panel", level: 1, icon: ControlIcon },
];

const files: [string, string, string][] = [
  ["benefitpolice.rtf", "10/29/2022 5:31 PM", "3 KB"],
  ["centurybusiness.rtf", "8/23/2018 9:25 AM", "3 KB"],
  ["file.js", "2/15/2026 4:49 AM", "118 KB"],
  ["halfpre.jpg", "2/21/2019 1:41 PM", "22 KB"],
  ["listscompleted.rtf", "8/11/2019 10:29 PM", "4 KB"],
  ["metelephone.rtf", "5/12/2018 1:04 AM", "3 KB"],
  ["niceincludes.png", "11/20/2025 7:33 AM", "8 KB"],
  ["officeyou.rtf", "11/10/2017 8:48 PM", "3 KB"],
  ["ohioadvertising.rtf", "1/27/2025 11:28 PM", "3 KB"],
  ["richardmost.png", "11/20/2024 11:01 PM", "5 KB"],
  ["roottest.jpg", "5/23/2017 12:00 PM", "29 KB"],
  ["rssher.rtf", "7/29/2024 7:12 PM", "3 KB"],
  ["shoessession.png", "5/22/2021 7:39 PM", "3 KB"],
  ["waysdomain.png", "5/11/2022 8:43 AM", "3 KB"],
  ["whetherindia.png", "8/9/2024 2:40 PM", "4 KB"],
];

const kinds: Record<string, { type: string; icon: Art }> = {
  rtf: { type: "Rich Text Format", icon: RtfIcon },
  js: { type: "JavaScript File", icon: ScriptFileIcon },
  jpg: { type: "JPG File", icon: ImageFileIcon },
  png: { type: "PNG File", icon: ImageFileIcon },
};

/* ---------- Window sections ---------- */

const WindowTitleBar = () => (
  <TitleBar>
    <QuickTools>
      <MonitorIcon />
      <Bar />
      <svg width="16" height="16" viewBox="0 0 16 16">
        <path d="M2.500 0.500h8l3 3v12h-11z" fill="#fff" stroke="#8a939b" />
        <path d="M4.500 9l2.500 2.500 5-5" fill="none" stroke="#e8632a" strokeWidth="1.800" />
      </svg>
      <svg width="13" height="16" viewBox="0 0 13 16">
        <path d="M0.500 0.500h10v15h-10z" fill="#fde08a" stroke="#efcb6c" />
        <path d="M10 9h2.500v6.500H9z" fill="#f5cf66" />
      </svg>
      <svg width="7" height="8" viewBox="0 0 7 8">
        <path d="M0 1.500h7" stroke="#222" />
        <path d="M0 4h7L3.500 8z" fill="#222" />
      </svg>
      <Bar />
    </QuickTools>
    <WindowTitle>Desktop</WindowTitle>
    <CaptionButton aria-label="Minimize">
      <svg width="10" height="10"><path d="M0 5.500h10" stroke="#777" /></svg>
    </CaptionButton>
    <CaptionButton aria-label="Maximize">
      <svg width="10" height="10"><path d="M0.500 0.500h9v9h-9z" fill="none" stroke="#777" /></svg>
    </CaptionButton>
    <CaptionButton aria-label="Close">
      <svg width="10" height="10"><path d="M0 0l10 10M10 0L0 10" stroke="#777" /></svg>
    </CaptionButton>
  </TitleBar>
);

const WindowRibbon = () => (
  <Ribbon>
    <Group $width={263}>
      <GroupBody>
        <BigButton $width={69} $muted><PinIcon /><span>Pin to Quick<br />access</span></BigButton>
        <BigButton $width={41}><CopyIcon />Copy</BigButton>
        <BigButton $width={42} $muted><PasteIcon />Paste</BigButton>
        <Stack>
          <SmallButton><CutIcon />Cut</SmallButton>
          <SmallButton><CopyPathIcon />Copy path</SmallButton>
          <SmallButton $muted><PasteShortcutIcon />Paste shortcut</SmallButton>
        </Stack>
      </GroupBody>
      <GroupName>Clipboard</GroupName>
    </Group>
    <Group $width={191}>
      <GroupBody>
        <BigButton $width={41}><MoveIcon /><span>Move<br /><LabelArrow>to <DownArrow /></LabelArrow></span></BigButton>
        <BigButton $width={43}><CopyToIcon /><span>Copy<br /><LabelArrow>to <DownArrow /></LabelArrow></span></BigButton>
        <Divider />
        <BigButton $width={42}><DeleteIcon /><span>Delete<br /><LabelArrow><DownArrow /></LabelArrow></span></BigButton>
        <BigButton $width={46}><RenameIcon />Rename</BigButton>
      </GroupBody>
      <GroupName>Organize</GroupName>
    </Group>
    <Group $width={145}>
      <GroupBody>
        <BigButton $width={41}><NewFolderIcon /><span>New<br />folder</span></BigButton>
        <Stack>
          <SmallButton><NewItemIcon />New item <DownArrow /></SmallButton>
          <SmallButton><EasyAccessIcon />Easy access <DownArrow /></SmallButton>
        </Stack>
      </GroupBody>
      <GroupName>New</GroupName>
    </Group>
    <Group $width={133}>
      <GroupBody>
        <BigButton $width={56}><PropertiesIcon /><span>Properties<br /><LabelArrow><DownArrow /></LabelArrow></span></BigButton>
        <Stack>
          <SmallButton><OpenIcon />Open <DownArrow /></SmallButton>
          <SmallButton><EditIcon />Edit</SmallButton>
          <SmallButton><HistoryIcon />History</SmallButton>
        </Stack>
      </GroupBody>
      <GroupName>Open</GroupName>
    </Group>
    <Group $width={115}>
      <GroupBody>
        <Stack>
          <SmallButton><SelectAllIcon />Select all</SmallButton>
          <SmallButton><SelectNoneIcon />Select none</SmallButton>
          <SmallButton><InvertIcon />Invert selection</SmallButton>
        </Stack>
      </GroupBody>
      <GroupName>Select</GroupName>
    </Group>
  </Ribbon>
);

const WindowAddress = () => (
  <AddressRow>
    <NavButtons>
      <button aria-label="Back"><Arrow dir="left" color="#666" /></button>
      <button aria-label="Forward"><Arrow dir="right" color="#d2d2d2" /></button>
      <button aria-label="Recent locations"><Chevron dir="down" color="#777" size={8} /></button>
      <button aria-label="Up"><Arrow dir="up" color="#666" /></button>
    </NavButtons>
    <AddressBar>
      <MonitorIcon />
      <Crumb aria-label="Desktop root"><Chevron dir="right" /></Crumb>
      <span>This PC</span>
      <Crumb aria-label="This PC folders"><Chevron dir="right" /></Crumb>
      <span>Desktop</span>
      <AddressEnd>
        <button aria-label="Previous locations"><Chevron dir="down" /></button>
        <RefreshButton aria-label="Refresh">
          <svg width="12" height="12" viewBox="0 0 12 12">
            <path d="M3 3.500A4 4 0 1 0 9.500 4.200M3 0.500v3.500M2 1.500h4v3.500" fill="none" stroke="#666" strokeWidth="1.500" />
          </svg>
        </RefreshButton>
      </AddressEnd>
    </AddressBar>
    <SearchBox>
      <input type="text" placeholder="Search Desktop" aria-label="Search Desktop" />
      <svg width="12" height="12" viewBox="0 0 12 12">
        <circle cx="7.500" cy="4.500" r="3.500" fill="none" stroke="#555" strokeWidth="1.600" />
        <path d="M5 7l-4.500 4.500" stroke="#555" strokeWidth="1.800" />
      </svg>
    </SearchBox>
  </AddressRow>
);

const WindowFiles = () => (
  <FilePane>
    <FileTable>
      <colgroup>
        <col width="258" />
        <col width="144" />
        <col width="120" />
        <col width="80" />
      </colgroup>
      <thead>
        <tr>
          <th>
            <HeadButton>
              Name
              <SortMark><Chevron dir="up" color="#777" weight={1} /></SortMark>
            </HeadButton>
          </th>
          <th><HeadButton>Date modified</HeadButton></th>
          <th><HeadButton>Type</HeadButton></th>
          <th><HeadButton>Size</HeadButton></th>
        </tr>
      </thead>
      <tbody>
        {files.map(([name, date, size]) => {
          const kind = kinds[name.split(".")[1]];
          const FileIcon = kind.icon;
          return (
            <FileRow key={name} $selected={name === "file.js"}>
              <td><FileName><FileIcon />{name}</FileName></td>
              <td>{date}</td>
              <td>{kind.type}</td>
              <td>{size}</td>
            </FileRow>
          );
        })}
      </tbody>
    </FileTable>
  </FilePane>
);

const WindowStatus = () => (
  <StatusBar>
    <ItemCount>15 items</ItemCount>
    <span>1 item selected</span>
    <span>117 KB</span>
    <ViewButtons>
      <ViewButton $on aria-label="Details view">
        <svg width="16" height="16" viewBox="0 0 16 16">
          <path d="M0.500 1.500h3v3h-3zM0.500 6.500h3v3h-3zM0.500 11.500h3v3h-3z" fill="#fff" stroke="#a07d60" />
          <path d="M6 3.500h4M11 3.500h5M6 8.500h4M11 8.500h5M6 13.500h4M11 13.500h5" stroke="#4a6f8a" />
        </svg>
      </ViewButton>
      <ViewButton aria-label="Large icons view">
        <svg width="14" height="12" viewBox="0 0 14 12">
          <path d="M0.500 0.500h13v10h-13z" fill="#fff" stroke="#7b93a8" />
          <path d="M2 2h10v7H2z" fill="url(#photo)" />
        </svg>
      </ViewButton>
    </ViewButtons>
  </StatusBar>
);

const ExplorerWindow = () => (
  <Window aria-label="Desktop">
    <WindowTitleBar />
    <Tabs>
      <Tab $kind="file">File</Tab>
      <Tab $kind="active">Home</Tab>
      <Tab>Share</Tab>
      <Tab>View</Tab>
      <TabTools>
        <button aria-label="Minimize the ribbon"><Chevron dir="up" color="#999" weight={1} size={10} /></button>
        <Help aria-label="Help">?</Help>
      </TabTools>
    </Tabs>
    <WindowRibbon />
    <WindowAddress />
    <Content>
      <NavPane>
        {navItems.map(({ label, level, icon: NavIcon, selected }, i) => (
          <li key={i}>
            <NavItem $level={level} $selected={selected}><NavIcon />{label}</NavItem>
          </li>
        ))}
      </NavPane>
      <ScrollTrack>
        <ScrollArrow aria-label="Scroll up"><Chevron dir="up" /></ScrollArrow>
        <ScrollSpace><ScrollThumb /></ScrollSpace>
        <ScrollArrow aria-label="Scroll down"><Chevron dir="down" /></ScrollArrow>
      </ScrollTrack>
      <WindowFiles />
    </Content>
    <WindowStatus />
  </Window>
);

const GiftsArt = () => (
  <svg width="68" height="36" viewBox="0 0 68 36" aria-hidden="true">
    <path d="M4 7l6-5 3 4 5-5 3 6z" fill="#c8463c" />
    <path d="M0 8l21-2 1 24-19 3z" fill="#1f8a70" />
    <path d="M1 13l10 6 10-8M1.500 19l10 6 10-8M2 25l10 6 10-8" fill="none" stroke="#e8f3ea" strokeWidth="2" />
    <path d="M23 11h27l-2 22-22 2z" fill="#d43a2e" />
    <path d="M28 11h4v23h-4zM41 11h4v22h-4z" fill="#f1c35b" />
    <path d="M22 9h28v4H22z" fill="#e8b04a" />
    <path d="M36 9c-6-8-10-8-10-4 2 4 6 4 10 4zm0 0c6-8 10-8 10-4-2 4-6 4-10 4z" fill="none" stroke="#e8b04a" strokeWidth="2.200" />
    <path d="M51 18h16l-1 14-14 1z" fill="#a9b7e0" />
    <path d="M50 16h17v5H50z" fill="#d8434a" />
    <path d="M57 17h4v15h-4z" fill="#e58b92" />
    <path d="M59 16c-4-5-6-5-5-1zm0 0c3-5 6-5 5-1z" fill="none" stroke="#d8434a" strokeWidth="2" />
  </svg>
);

const NotepadArt = () => (
  <svg width="24" height="26" viewBox="0 0 24 26" aria-hidden="true">
    <path d="M2 3h17v22H2z" fill="#f3f6ee" stroke="#9aa58a" />
    <path d="M3 16c6-2 10 0 15-4v12H3z" fill="#7cc63a" />
    <path d="M3 3h15" stroke="#777" strokeDasharray="1 1" strokeWidth="2" />
    <path d="M6.500 8v6M6 8.500h3v5M10.500 11h3M12 9.500v3M14.500 11h3M16 9.500v3" fill="none" stroke="#333" />
    <path d="M20 1l3 1-8 15-3 3 .500-4z" fill="#b5cf4a" stroke="#7a8a20" strokeWidth="0.600" />
  </svg>
);

const DesktopTaskbar = () => (
  <Taskbar>
    <TaskButton aria-label="Start">
      <svg width="16" height="16" viewBox="0 0 16 16">
        <path d="M0 2.300L6.500 1.400v6.200H0zM7.400 1.200L16 0v7.600H7.400zM0 8.400h6.500v6.200L0 13.700zM7.400 8.400H16V16l-8.600-1.200z" fill="#fff" />
      </svg>
    </TaskButton>
    <TaskSearch>
      <svg width="17" height="17" viewBox="0 0 17 17">
        <circle cx="10.500" cy="6.500" r="5.500" fill="none" stroke="#222" strokeWidth="1.300" />
        <path d="M6.500 10.500L0.500 16.500" stroke="#222" strokeWidth="1.300" />
      </svg>
      <input type="text" placeholder="Type here to search" aria-label="Type here to search" />
      <GiftsArt />
    </TaskSearch>
    <TaskButton aria-label="Task View">
      <svg width="17" height="16" viewBox="0 0 17 16" fill="none" stroke="#fff">
        <path d="M0.500 0v2.500h11V0M0.500 5.500h11v5h-11zM0.500 16v-2.500h11V16M15.500 0v3M15.500 8v8" />
        <path d="M14 4h3v3h-3z" fill="#fff" stroke="none" />
      </svg>
    </TaskButton>
    <Apps>
      <TaskButton aria-label="Microsoft Edge"><EdgeArt size={24} /></TaskButton>
      <TaskButton $running aria-label="File Explorer"><LibrariesIcon size={22} /></TaskButton>
      <TaskButton aria-label="Firefox"><FirefoxArt size={24} /></TaskButton>
      <TaskButton $running aria-label="Google Chrome"><ChromeArt size={24} /></TaskButton>
      <TaskButton $running aria-label="Notepad++"><NotepadArt /></TaskButton>
    </Apps>
    <Tray>
      <TrayButton aria-label="Show hidden icons">
        <svg width="12" height="8"><path d="M1 7l5-5 5 5" fill="none" stroke="#fff" strokeWidth="1.300" /></svg>
      </TrayButton>
      <TrayButton aria-label="Meet Now">
        <svg width="14" height="16" viewBox="0 0 14 16" fill="none" stroke="#fff">
          <rect x="1.500" y="5.500" width="7" height="6" rx="1.500" />
          <path d="M8.500 8l3-2v5l-3-2M3 2.500q4-2.500 8 0M3 13.500q4 2.500 8 0" />
        </svg>
      </TrayButton>
      <TrayButton aria-label="Volume">
        <svg width="17" height="14" viewBox="0 0 17 14" fill="none" stroke="#fff">
          <path d="M0.500 4.500h2.500l3.500-3.500v12L3 9.500H0.500zM8.500 5q1.500 2 0 4M11 3.500q3 3.500 0 7M13.500 2q4 5 0 10" />
        </svg>
      </TrayButton>
      <TrayButton aria-label="Network">
        <svg width="16" height="14" viewBox="0 0 16 14" fill="none" stroke="#fff">
          <path d="M6 1.500h9.500v8H3.500V5M0.500 0.500h4v4h-4zM9.500 9.500v3M6 12.500h7" />
        </svg>
      </TrayButton>
      <Clock>4:50 AM<br />2/15/2026</Clock>
      <TrayButton $width={44} aria-label="Notifications">
        <svg width="17" height="17" viewBox="0 0 17 17">
          <path d="M0.500 1.500h16v11h-5l-3 3-3-3h-5z" fill="none" stroke="#fff" strokeWidth="1.200" />
        </svg>
      </TrayButton>
      <ShowDesktop aria-label="Show desktop" />
    </Tray>
  </Taskbar>
);

const App = () => (
  <Screen>
    <GlobalStyle />
    <SharedDefs />
    <Rays viewBox="0 0 1360 768" preserveAspectRatio="none" aria-hidden="true">
      <path d="M225 0L520 94H760L420 0z" fill="url(#rayFade)" />
      <path d="M225 0L520 94" stroke="#4cc0ff" strokeOpacity="0.25" />
    </Rays>
    <DesktopArea>
      <IconGrid>
        {desktopIcons.map(({ lines, art: IconArt }) => (
          <li key={lines[0]}>
            <DesktopIcon>
              <IconArt />
              <IconLabel>
                {lines.map((line, i) => (
                  <React.Fragment key={line}>
                    {i > 0 && <br />}
                    {line}
                  </React.Fragment>
                ))}
              </IconLabel>
            </DesktopIcon>
          </li>
        ))}
      </IconGrid>
      <ExplorerWindow />
    </DesktopArea>
    <DesktopTaskbar />
    <Watermark aria-hidden="true">
      <span>ANY</span>
      <svg width="60" height="64" viewBox="0 0 60 64" fill="none" stroke="#fff" strokeOpacity="0.6" strokeWidth="4">
        <path d="M14 48V5l42 28v6L18 61q-5-1-3-6l28-18" />
        <path d="M13 12l-8 3v41q1 3 5 1l33-20-19-13v17" />
      </svg>
      <span>RUN</span>
    </Watermark>
  </Screen>
);

export default App;
